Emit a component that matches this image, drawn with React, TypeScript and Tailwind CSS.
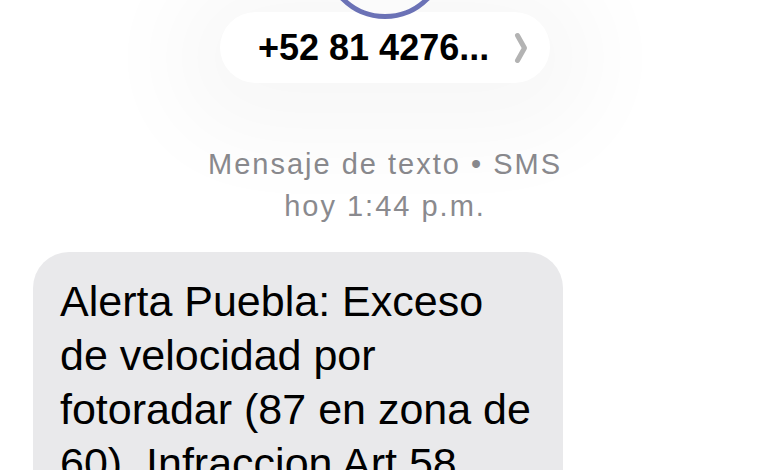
import React from 'react';

const lines = [
  "Alerta Puebla: Exceso",
  "de velocidad por",
  "fotoradar (87 en zona de",
  "60). Infraccion Art.58",
];

export default function App() {
  return (
    <div className="relative w-[770px] h-[470px] overflow-hidden bg-white font-['Liberation_Sans',Arial,sans-serif]">
      {/* Header with contact pill */}
      <div className="relative flex flex-col items-center pt-[12px]">
        <div className="relative flex items-center w-[330px] h-[71px] rounded-full bg-white pl-[38px] pr-[22px] shadow-[0_10px_90px_50px_rgba(0,0,0,0.03)]">
          <span className="text-[36px] font-bold text-black">+52 81 4276...</span>
          <svg className="ml-auto" width="14" height="32" viewBox="0 0 14 32">
            <path d="M3.5 3.5 L10.5 16 L3.5 28.5" fill="none" stroke="#b3b3b3" strokeWidth="5" strokeLinecap="round" strokeLinejoin="round" />
          </svg>
        </div>
        {/* Avatar ring, overlapping the pill top */}
        <div className="absolute left-[323px] top-[-105px] w-[124px] h-[124px] rounded-full border-[5px] border-[#6b72b6] bg-[#fbfbfb]" />
      </div>

      {/* Meta */}
      <div className="mt-[60px] flex flex-col items-center text-[29px] leading-[42px] text-[#8a8a8e] tracking-[2px]">
        <span>Mensaje de texto • SMS</span>
        <span>hoy 1:44 p.m.</span>
      </div>

      {/* Message bubble */}
      <div className="mt-[25px] ml-[33px] w-[530px] rounded-[36px] bg-[#e9e9eb] pt-[22px] pl-[27px] pb-[20px] text-[43px] leading-[54px] text-black">
        {lines.map((l, i) => (
          <div key={i} className="whitespace-nowrap">{l}</div>
        ))}
      </div>
    </div>
  );
}
